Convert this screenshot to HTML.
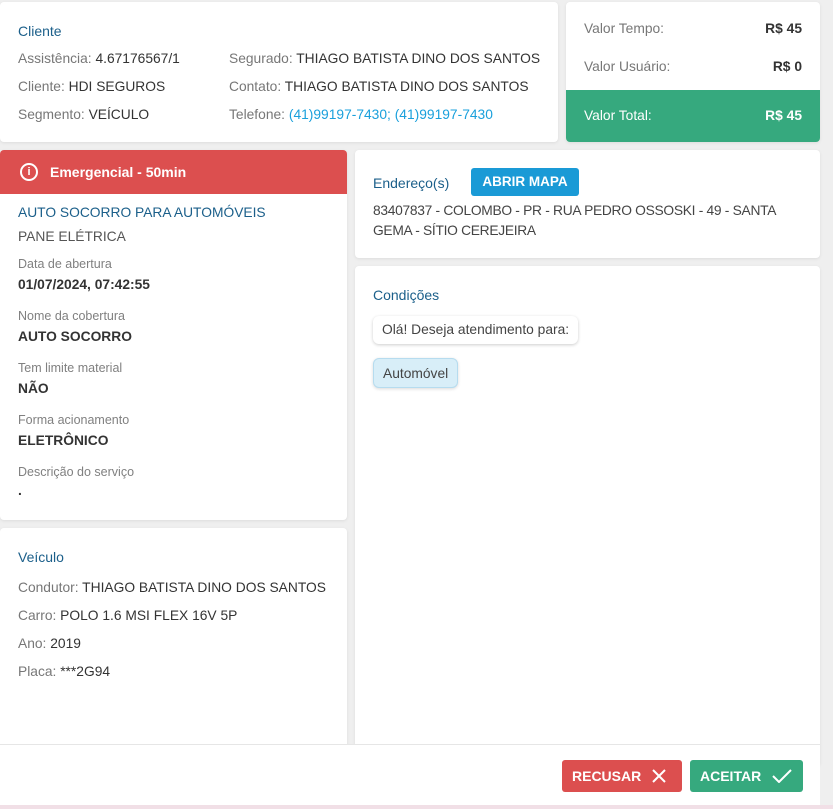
<!DOCTYPE html>
<html><head><meta charset="utf-8"><style>
*{margin:0;padding:0;box-sizing:border-box}
body{width:833px;height:809px;background:#efefef;font-family:"Liberation Sans",sans-serif;font-size:13.8px;color:#333;position:relative;overflow:hidden}
.card{position:absolute;background:#fff;border-radius:4px;box-shadow:0 1px 3px rgba(0,0,0,.08)}
.a{position:absolute;white-space:nowrap}
.t{color:#1b5f8a;font-size:14px;font-weight:normal}
.l{color:#777}
.s{color:#808080;font-size:12.5px}
.b{font-weight:bold;color:#333}
</style></head><body>
<div class="card" style="left:0;top:2px;width:558px;height:140px">
 <div class="a t" style="left:18px;top:21px">Cliente</div>
 <div class="a" style="left:18px;top:49px"><span class="l">Assistência:</span> 4.67176567/1</div>
 <div class="a" style="left:18px;top:77px"><span class="l">Cliente:</span> HDI SEGUROS</div>
 <div class="a" style="left:18px;top:105px"><span class="l">Segmento:</span> VEÍCULO</div>
 <div class="a" style="left:229px;top:49px"><span class="l">Segurado:</span> THIAGO BATISTA DINO DOS SANTOS</div>
 <div class="a" style="left:229px;top:77px"><span class="l">Contato:</span> THIAGO BATISTA DINO DOS SANTOS</div>
 <div class="a" style="left:229px;top:105px"><span class="l">Telefone:</span> <span style="color:#1aa0dc">(41)99197-7430; (41)99197-7430</span></div>
</div>
<div class="card" style="left:566px;top:2px;width:254px;height:140px;overflow:hidden">
 <div class="a l" style="left:18px;top:19px">Valor Tempo:</div>
 <div class="a b" style="right:18px;top:19px">R$ 45</div>
 <div class="a l" style="left:18px;top:57px">Valor Usuário:</div>
 <div class="a b" style="right:18px;top:57px">R$ 0</div>
 <div style="position:absolute;left:0;top:88px;width:100%;height:52px;background:#36a97e;color:#fff">
  <div class="a" style="left:18px;top:18px">Valor Total:</div>
  <div class="a" style="right:18px;top:18px;font-weight:bold">R$ 45</div>
 </div>
</div>
<div class="card" style="left:0;top:150px;width:347px;height:370px;overflow:hidden">
 <div style="height:44px;background:#dc4f4f;color:#fff;position:relative">
  <div class="a" style="left:20px;top:13px;width:18px;height:18px;border:2px solid #fff;border-radius:50%;font-size:11px;font-weight:bold;text-align:center;line-height:14px">i</div>
  <div class="a" style="left:50px;top:14px;font-weight:bold;font-size:14px">Emergencial - 50min</div>
 </div>
 <div class="a t" style="left:18px;top:55px;font-size:13.8px">AUTO SOCORRO PARA AUTOMÓVEIS</div>
 <div class="a" style="left:18px;top:79px;color:#555">PANE ELÉTRICA</div>
 <div class="a s" style="left:18px;top:107px">Data de abertura</div>
 <div class="a b" style="left:18px;top:127px">01/07/2024, 07:42:55</div>
 <div class="a s" style="left:18px;top:159px">Nome da cobertura</div>
 <div class="a b" style="left:18px;top:179px">AUTO SOCORRO</div>
 <div class="a s" style="left:18px;top:211px">Tem limite material</div>
 <div class="a b" style="left:18px;top:231px">NÃO</div>
 <div class="a s" style="left:18px;top:263px">Forma acionamento</div>
 <div class="a b" style="left:18px;top:283px">ELETRÔNICO</div>
 <div class="a s" style="left:18px;top:315px">Descrição do serviço</div>
 <div class="a b" style="left:18px;top:333px">.</div>
</div>
<div class="card" style="left:0;top:528px;width:347px;height:230px">
 <div class="a t" style="left:18px;top:21px">Veículo</div>
 <div class="a" style="left:18px;top:52px"><span class="l">Condutor:</span> THIAGO BATISTA DINO DOS SANTOS</div>
 <div class="a" style="left:18px;top:80px"><span class="l">Carro:</span> POLO 1.6 MSI FLEX 16V 5P</div>
 <div class="a" style="left:18px;top:108px"><span class="l">Ano:</span> 2019</div>
 <div class="a" style="left:18px;top:136px"><span class="l">Placa:</span> ***2G94</div>
</div>
<div class="card" style="left:355px;top:150px;width:465px;height:108px">
 <div class="a t" style="left:18px;top:25px">Endereço(s)</div>
 <div class="a" style="left:116px;top:18px;width:108px;height:28px;background:#1a9ad6;border-radius:3px;color:#fff;font-weight:bold;text-align:center;line-height:28px;font-size:13.5px">ABRIR MAPA</div>
 <div class="a" style="left:18px;top:51px;color:#444;line-height:20px;white-space:normal;width:440px;letter-spacing:-.3px">83407837 - COLOMBO - PR - RUA PEDRO OSSOSKI - 49 - SANTA GEMA - SÍTIO CEREJEIRA</div>
</div>
<div class="card" style="left:355px;top:266px;width:465px;height:500px">
 <div class="a t" style="left:18px;top:21px">Condições</div>
 <div class="a" style="left:18px;top:50px;padding:0 9px;height:28px;line-height:28px;border-radius:6px;box-shadow:0 1px 3px rgba(0,0,0,.2);background:#fff;color:#444">Olá! Deseja atendimento para:</div>
 <div class="a" style="left:18px;top:92px;padding:0 9px;height:30px;line-height:30px;border-radius:6px;background:#d8eef8;border:1px solid #b6dcef;box-shadow:0 1px 3px rgba(0,0,0,.15);color:#444">Automóvel</div>
</div>
<div style="position:absolute;left:0;top:744px;width:820px;height:61px;background:#fff;border-top:1px solid #e6e6e6">
 <div class="a" style="left:562px;top:15px;width:120px;height:32px;background:#dc4f4f;border-radius:3px;color:#fff;font-weight:bold;font-size:14px;line-height:32px;padding-left:10px">RECUSAR
  <svg style="position:absolute;left:90px;top:9px" width="14" height="14" viewBox="0 0 14 14"><path d="M1 1L13 13M13 1L1 13" stroke="#fff" stroke-width="2"/></svg></div>
 <div class="a" style="left:690px;top:15px;width:113px;height:32px;background:#36a97e;border-radius:3px;color:#fff;font-weight:bold;font-size:14px;line-height:32px;padding-left:10px">ACEITAR
  <svg style="position:absolute;left:82px;top:9px" width="20" height="14" viewBox="0 0 20 14"><path d="M1 7L7 13L19 1" stroke="#fff" stroke-width="2" fill="none"/></svg></div>
</div>
<div style="position:absolute;left:0;top:805px;width:833px;height:4px;background:#f1dfe6"></div>
</body></html>
